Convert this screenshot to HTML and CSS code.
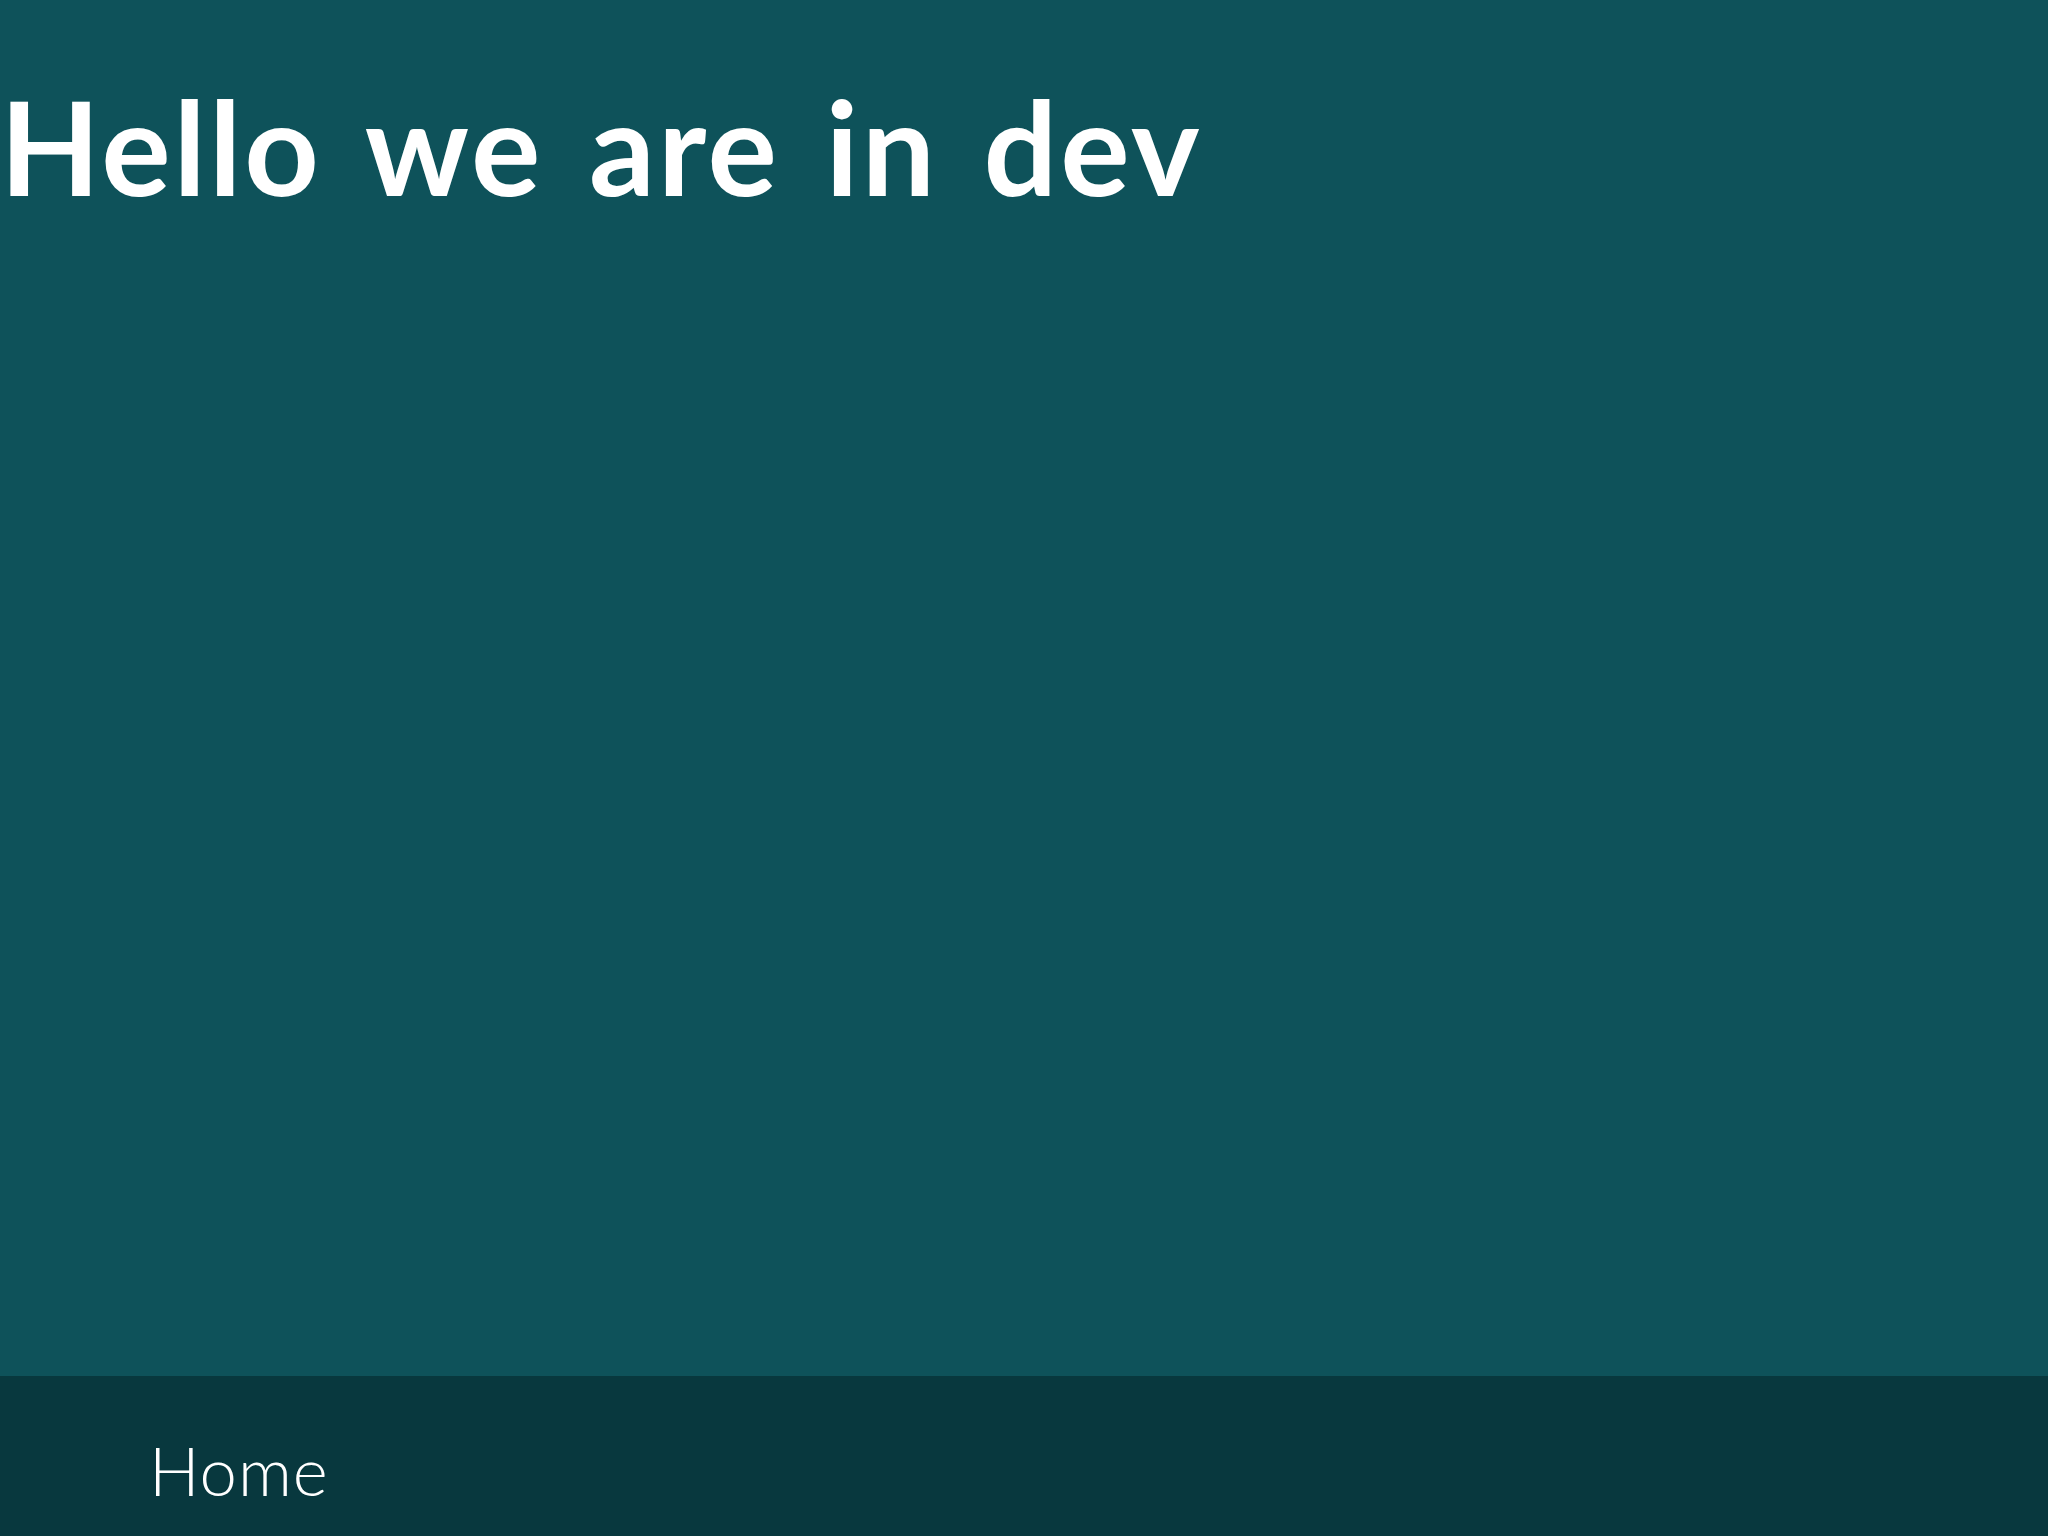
FILE: index.html
```html
<!DOCTYPE html>
<html lang="en">
<head>
<meta charset="utf-8">
<title>Hello we are in dev</title>
<link rel="stylesheet" href="styles.css">
</head>
<body>
<main class="main">
  <h1 class="title">Hello we are in dev</h1>
</main>
<footer class="footer">
  <nav class="nav">
    <a class="nav-link" href="#">Home</a>
  </nav>
</footer>
</body>
</html>
```
FILE: styles.css
```css
html, body {
  margin: 0;
  padding: 0;
  height: 100%;
}
body {
  display: flex;
  flex-direction: column;
  background: #0e525a;
  font-family: Lato, "Open Sans", sans-serif;
  color: #ffffff;
}
.main {
  flex: 1;
  background: #0e525a;
}
.title {
  margin: 81px 0 0 0;
  font-size: 130px;
  line-height: 1;
  font-weight: 700;
  letter-spacing: 3px;
  word-spacing: 11px;
}
.footer {
  height: 160px;
  background: #08383e;
  box-sizing: border-box;
  padding: 61px 0 0 149px;
}
.nav-link {
  display: block;
  color: #ffffff;
  text-decoration: none;
  font-size: 67px;
  line-height: 1;
  font-weight: 300;
  letter-spacing: 1px;
}
```
